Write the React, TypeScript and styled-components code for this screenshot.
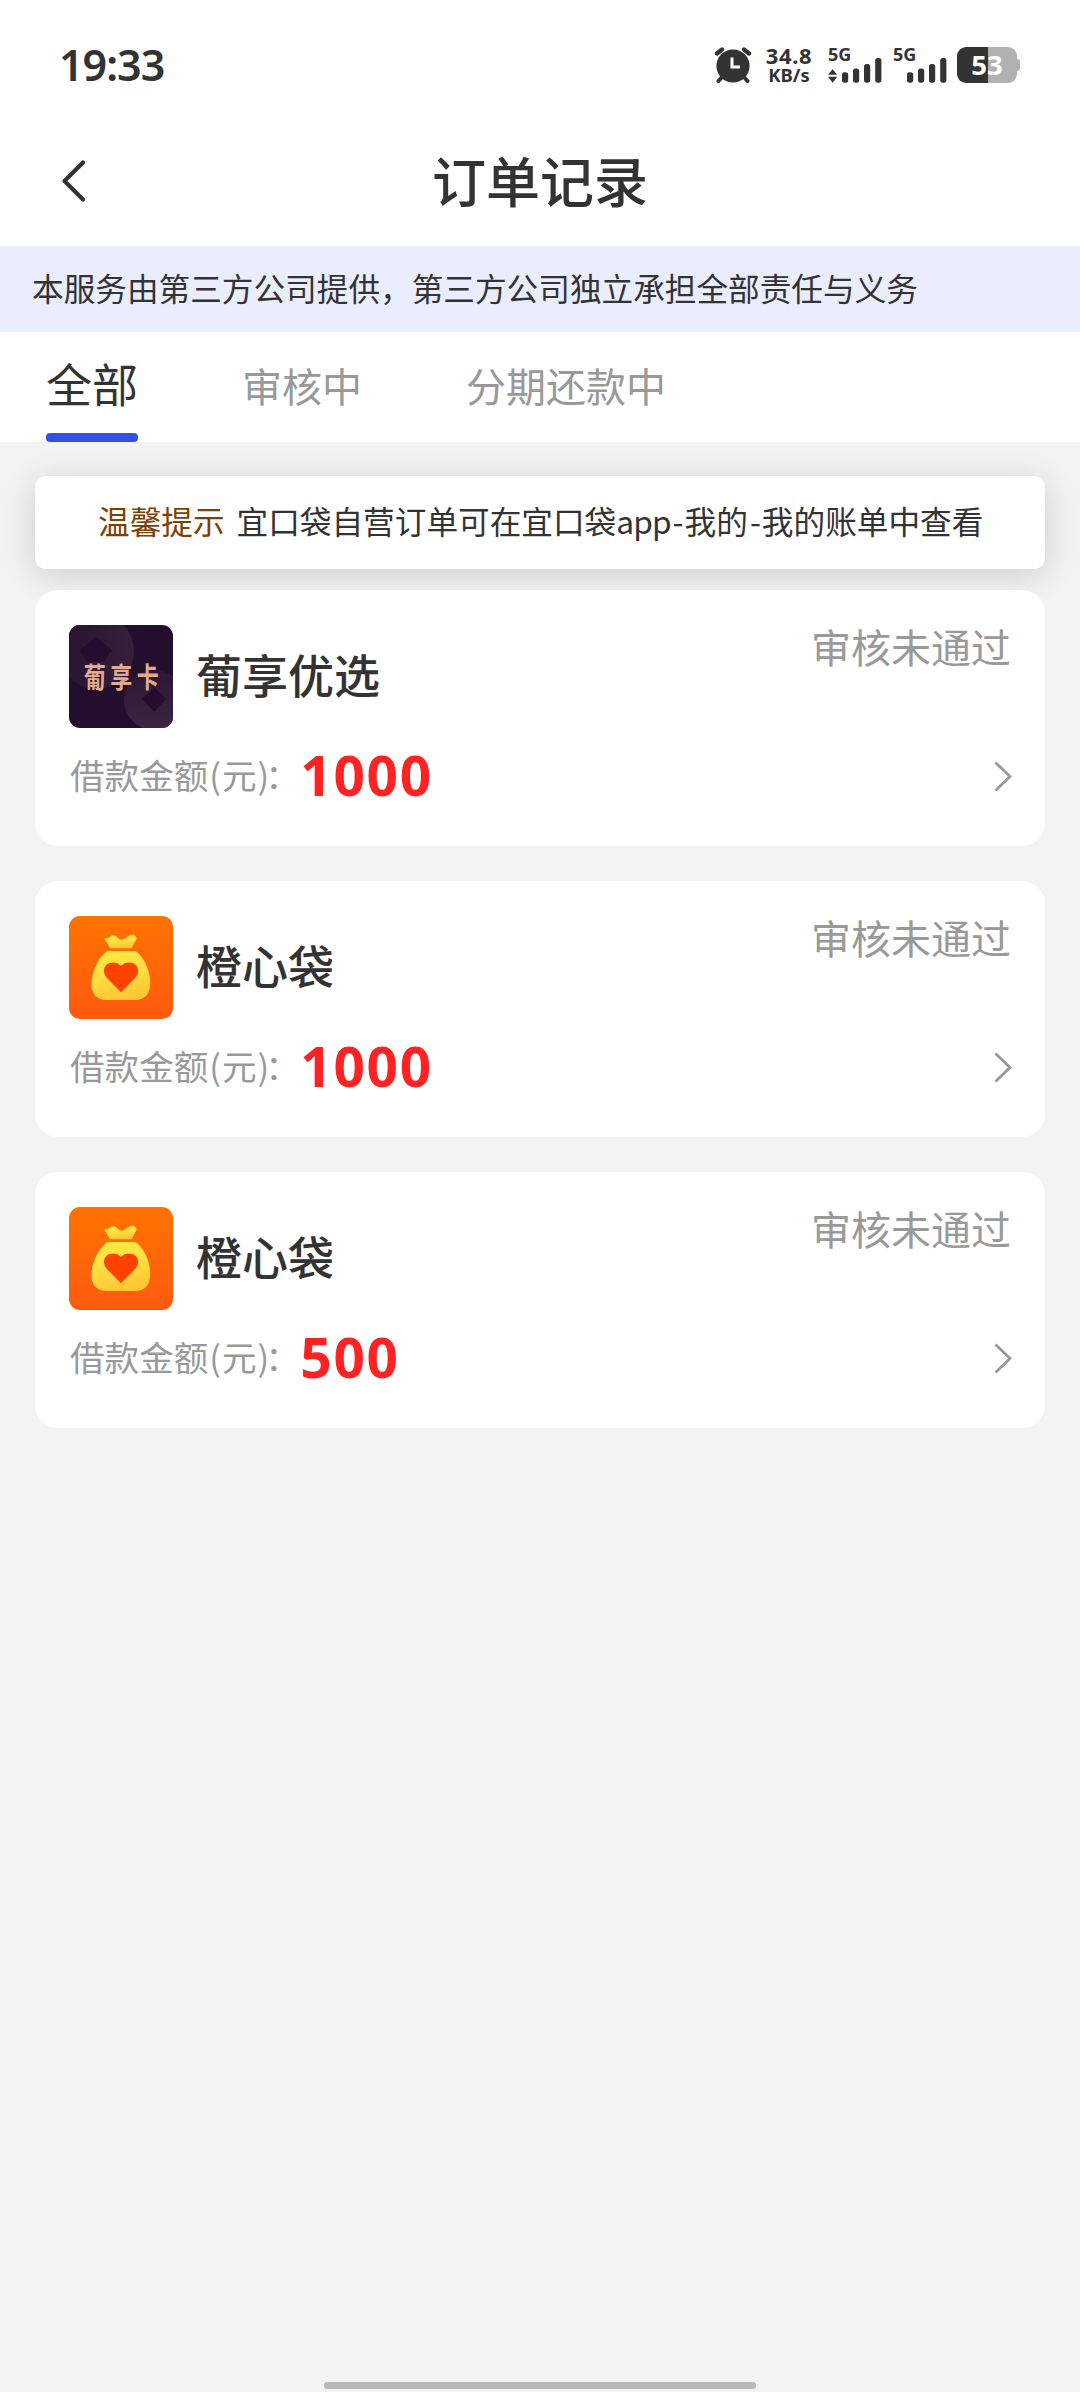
import React from "react";
import styled, { createGlobalStyle } from "styled-components";

const GlobalStyle = createGlobalStyle`
  *, *::before, *::after { box-sizing: border-box; }
  html, body { margin: 0; padding: 0; background: #f3f3f3; }
  body { font-family: "Noto Sans CJK SC", "Noto Sans", sans-serif; color: #333; }
`;

const Page = styled.div`
  width: 1080px;
  height: 2392px;
  display: flex;
  flex-direction: column;
  background: #f3f3f3;
  overflow: hidden;
`;

const StatusBar = styled.header`
  height: 116px;
  flex: none;
  padding: 14px 60px 0 59px;
  display: flex;
  align-items: center;
  justify-content: space-between;
  background: #fefefe;
`;

const Clock = styled.span`
  font: 600 43px/50px "Noto Sans", sans-serif;
  letter-spacing: -1px;
  color: #333;
`;

const Indicators = styled.div`
  display: flex;
  align-items: center;
  height: 36px;
`;

const Speed = styled.div`
  width: 50px;
  margin: 0 14px 0 12px;
  display: flex;
  flex-direction: column;
  align-items: center;
  font-family: "Noto Sans", sans-serif;
  font-weight: 700;
  color: #333;
`;

const SpeedValue = styled.span`
  font-size: 22px;
  line-height: 19px;
  letter-spacing: 0.6px;
`;

const SpeedUnit = styled.span`
  font-size: 18.5px;
  line-height: 20px;
`;

const Signal = styled.div<{ $gap: number }>`
  display: flex;
  flex-direction: column;
  height: 36px;
  width: 54px;
  margin-right: ${(p) => p.$gap}px;
`;

const SignalLabel = styled.span`
  height: 11px;
  font: 700 18px/15px "Noto Sans", sans-serif;
  color: #333;
`;

const Battery = styled.div`
  display: flex;
  align-items: center;
`;

const BatteryBody = styled.div`
  width: 60px;
  height: 36px;
  border-radius: 9px;
  display: flex;
  align-items: center;
  justify-content: center;
  background: linear-gradient(to right, #333 31px, #b1b1b1 31px);
  font: 700 27.5px/36px "Noto Sans", sans-serif;
  color: #fff;
`;

const BatteryTip = styled.div`
  width: 3px;
  height: 12px;
  border-radius: 0 3px 3px 0;
  background: #b1b1b1;
`;

const NavBar = styled.nav`
  height: 130px;
  flex: none;
  padding: 0 60px;
  display: grid;
  grid-template-columns: 60px 1fr 60px;
  align-items: center;
  background: #fefefe;
`;

const BackButton = styled.button`
  width: 28px;
  height: 44px;
  padding: 0;
  border: 0;
  background: none;
  display: flex;
`;

const Title = styled.h1`
  margin: 0;
  padding-bottom: 3px;
  text-align: center;
  font-size: 54px;
  line-height: 80px;
  font-weight: 500;
  color: #333;
`;

const Disclaimer = styled.p`
  margin: 0;
  flex: none;
  height: 86px;
  padding-left: 32px;
  background: #eaedfd;
  font-size: 31.65px;
  line-height: 82px;
  color: #333;
  white-space: nowrap;
`;

const Tabs = styled.div`
  flex: none;
  height: 110px;
  padding-left: 46px;
  display: flex;
  gap: 104px;
  background: #fff;
`;

const Tab = styled.div<{ $active?: boolean }>`
  display: flex;
  flex-direction: column;
  justify-content: space-between;
  font-size: ${(p) => (p.$active ? "46px" : "40px")};
  line-height: ${(p) => (p.$active ? "100px" : "106px")};
  color: ${(p) => (p.$active ? "#333" : "#999")};
  white-space: nowrap;
`;

const TabLine = styled.div`
  height: 9px;
  border-radius: 4px;
  background: #3352e4;
`;

const Content = styled.main`
  flex: 1;
  padding: 34px 35px 0;
  display: flex;
  flex-direction: column;
`;

const Tip = styled.p`
  margin: 0 0 21px;
  height: 93px;
  flex: none;
  padding: 0 63px;
  border-radius: 11px;
  background: #fff;
  box-shadow: 0 6px 35px rgba(0, 0, 0, 0.16);
  font-size: 31.65px;
  line-height: 88px;
  white-space: nowrap;
`;

const TipLabel = styled.span`
  margin-right: 12px;
  color: #7d4100;
`;

const AppWord = styled.span`
  letter-spacing: -0.9px;
`;

const Dash = styled.span`
  padding: 0 1px 0 2px;
`;

const OrderList = styled.div`
  display: flex;
  flex-direction: column;
  gap: 35px;
  position: relative;
`;

const OrderCard = styled.article`
  height: 256px;
  padding: 35px 34px 0;
  border-radius: 23px;
  background: #fff;
  display: flex;
  flex-direction: column;
`;

const OrderHead = styled.div`
  height: 103px;
  display: flex;
  align-items: flex-start;
`;

const ShopName = styled.h2`
  margin: 0 0 0 23px;
  flex: 1;
  font-size: 46px;
  line-height: 97px;
  font-weight: 500;
  color: #333;
`;

const Status = styled.span`
  font-size: 40px;
  line-height: 42px;
  color: #999;
`;

const OrderFoot = styled.div`
  height: 96px;
  display: flex;
  align-items: center;
`;

const AmountLabel = styled.span`
  padding: 0 0 4px 1px;
  font-size: 34.6px;
  line-height: 50px;
  color: #999;
`;

const Paren = styled.span`
  margin: 0 1px;
`;

const ColonBox = styled.span`
  display: inline-block;
  width: 35px;
  margin-left: -5px;
`;

const Amount = styled.strong`
  flex: 1;
  padding-bottom: 2px;
  font: 700 55px/60px "Noto Sans", sans-serif;
  letter-spacing: 1.7px;
  color: #ff2222;
`;

const CardLogo = styled.div`
  width: 104px;
  height: 103px;
  flex: none;
  border-radius: 11px;
  overflow: hidden;
  display: grid;
  background: #230e2e;
  & > * { grid-area: 1 / 1; }
`;

const CardLogoText = styled.span`
  align-self: center;
  justify-self: center;
  margin: 0 -5px 4px 0;
  font-weight: 700;
  font-size: 22px;
  line-height: 30px;
  letter-spacing: 4.5px;
  color: #e2aa8c;
  transform: scaleY(1.3);
`;

const BagLogo = styled.div`
  width: 104px;
  height: 103px;
  flex: none;
  border-radius: 11px;
  overflow: hidden;
  background: linear-gradient(#ff7300, #ff5a10);
`;

const ArrowBox = styled.span`
  display: flex;
  margin-right: -2px;
`;

const HomeIndicator = styled.div`
  flex: none;
  width: 432px;
  height: 7px;
  margin: 0 auto 3px;
  border-radius: 4px;
  background: #b9b9b9;
`;

function AlarmIcon() {
  return (
    <svg width="38" height="36" viewBox="0 0 38 36">
      <g stroke="#333" strokeWidth="4.4" strokeLinecap="round" fill="none">
        <path d="M3 6.5 8 2.5M35 6.5 30 2.5" />
        <path d="M8.5 29.5 4.5 34M29.5 29.5 33.5 34" strokeWidth="4" />
      </g>
      <circle cx="19" cy="19" r="16.6" fill="#333" />
      <path d="M18 10.5V20H26" stroke="#fff" strokeWidth="3" fill="none" />
    </svg>
  );
}

function SignalBars({ arrows }: { arrows?: boolean }) {
  return (
    <svg width="54" height="25" viewBox="0 0 54 25">
      {arrows && <path d="M0 16.7 4.6 11.3 9.2 16.7ZM0 18.7 4.6 24.8 9.2 18.7Z" fill="#333" />}
      <g fill="#333">
        <rect x="14" y="14.3" width="6.2" height="10.4" rx="2.6" />
        <rect x="25" y="10.6" width="6.2" height="14.1" rx="2.6" />
        <rect x="36" y="6" width="6.2" height="18.7" rx="2.6" />
        <rect x="47.2" y="0" width="6.2" height="24.7" rx="2.6" />
      </g>
    </svg>
  );
}

function BackIcon() {
  return (
    <svg width="28" height="44" viewBox="0 0 28 44">
      <path d="M23 3.5 4.5 22 23 40.5" fill="none" stroke="#333" strokeWidth="4.2" strokeLinecap="round" strokeLinejoin="round" />
    </svg>
  );
}

function ArrowIcon() {
  return (
    <ArrowBox>
      <svg width="20" height="32" viewBox="0 0 20 32">
        <path d="M2.5 2.5 17 16.5 2.5 30.5" fill="none" stroke="#999" strokeWidth="2.8" />
      </svg>
    </ArrowBox>
  );
}

function GrapeCardLogo() {
  return (
    <CardLogo>
      <svg width="104" height="103" viewBox="0 0 104 103">
        <defs>
          <linearGradient id="coinA" x1="0" y1="0" x2="1" y2="0">
            <stop offset="0" stopColor="#29132f" />
            <stop offset="1" stopColor="#34203b" />
          </linearGradient>
          <linearGradient id="coinB" x1="0" y1="0" x2="0" y2="1">
            <stop offset="0" stopColor="#2b1635" />
            <stop offset="1" stopColor="#3c2543" />
          </linearGradient>
        </defs>
        <circle cx="27" cy="26" r="38" fill="url(#coinA)" />
        <path d="M27 12 43 25 35 37H18L11 25Z" fill="#230e2e" />
        <circle cx="85" cy="75" r="30" fill="url(#coinB)" />
        <path d="M85 62 97 74 85 87 73 74Z" fill="#230e2e" />
      </svg>
      <CardLogoText>葡享卡</CardLogoText>
    </CardLogo>
  );
}

function OrangeBagLogo() {
  return (
    <BagLogo>
      <svg width="104" height="103" viewBox="0 0 104 103">
        <defs>
          <linearGradient id="bag" x1="0" y1="0" x2="0.25" y2="1">
            <stop offset="0" stopColor="#ffe83c" />
            <stop offset="0.5" stopColor="#ffe044" />
            <stop offset="1" stopColor="#ffc832" />
          </linearGradient>
        </defs>
        <path
          d="M36.3 22.2C38.5 22.4 40 21.5 41.5 20.2 43.2 18.9 45.2 18.9 47 20.2L50 22.8C51.6 24.2 53.6 24.2 55.2 22.8L59.5 20C62 18.2 65 18.4 66.6 20.2 68.2 22 67.4 23.8 66.2 25.4 64.6 27.6 64.2 29.4 63.4 31 63 31.8 62.6 32.2 61.6 32.2H41.6C40.6 32.2 40 31.7 39.8 30.8 39.2 28 38.2 26.4 36.2 24.4 35 23.2 35.2 22.2 36.3 22.2Z"
          fill="url(#bag)"
        />
        <path
          d="M40 35H64.5C66 35 67.2 35.4 68.4 36.4 75.5 42.5 81.3 55 81.3 66.5 81.3 77.5 76.5 84 66 84H38C27.5 84 22.5 78 22.5 68.5 22.5 56 29 42.6 36.4 36.4 37.4 35.4 38.6 35 40 35Z"
          fill="url(#bag)"
        />
        <path
          d="M52 76.3 38.2 62.2C33.8 57.5 34.2 52 37.5 48.8 41.5 45.2 48 45.8 52 49.8 56 45.8 62.5 45.2 66.5 48.8 70 52.2 70.2 57.7 65.8 62.2Z"
          fill="#ff4200"
        />
      </svg>
    </BagLogo>
  );
}

const orders = [
  { id: 1, name: "葡享优选", amount: 1000, Logo: GrapeCardLogo },
  { id: 2, name: "橙心袋", amount: 1000, Logo: OrangeBagLogo },
  { id: 3, name: "橙心袋", amount: 500, Logo: OrangeBagLogo },
];

export default function App() {
  return (
    <Page>
      <GlobalStyle />
      <StatusBar>
        <Clock>19:33</Clock>
        <Indicators>
          <AlarmIcon />
          <Speed>
            <SpeedValue>34.8</SpeedValue>
            <SpeedUnit>KB/s</SpeedUnit>
          </Speed>
          <Signal $gap={11}>
            <SignalLabel>5G</SignalLabel>
            <SignalBars arrows />
          </Signal>
          <Signal $gap={10}>
            <SignalLabel>5G</SignalLabel>
            <SignalBars />
          </Signal>
          <Battery>
            <BatteryBody>53</BatteryBody>
            <BatteryTip />
          </Battery>
        </Indicators>
      </StatusBar>
      <NavBar>
        <BackButton aria-label="返回">
          <BackIcon />
        </BackButton>
        <Title>订单记录</Title>
      </NavBar>
      <Disclaimer>本服务由第三方公司提供，第三方公司独立承担全部责任与义务</Disclaimer>
      <Tabs>
        <Tab $active>
          全部
          <TabLine />
        </Tab>
        <Tab>审核中</Tab>
        <Tab>分期还款中</Tab>
      </Tabs>
      <Content>
        <Tip>
          <TipLabel>温馨提示</TipLabel>
          宜口袋自营订单可在宜口袋<AppWord>app</AppWord><Dash>-</Dash>我的<Dash>-</Dash>我的账单中查看
        </Tip>
        <OrderList>
          {orders.map(({ id, name, amount, Logo }) => (
            <OrderCard key={id}>
              <OrderHead>
                <Logo />
                <ShopName>{name}</ShopName>
                <Status>审核未通过</Status>
              </OrderHead>
              <OrderFoot>
                <AmountLabel>
                  借款金额<Paren>(</Paren>元<Paren>)</Paren>
                  <ColonBox>：</ColonBox>
                </AmountLabel>
                <Amount>{amount}</Amount>
                <ArrowIcon />
              </OrderFoot>
            </OrderCard>
          ))}
        </OrderList>
      </Content>
      <HomeIndicator />
    </Page>
  );
}
